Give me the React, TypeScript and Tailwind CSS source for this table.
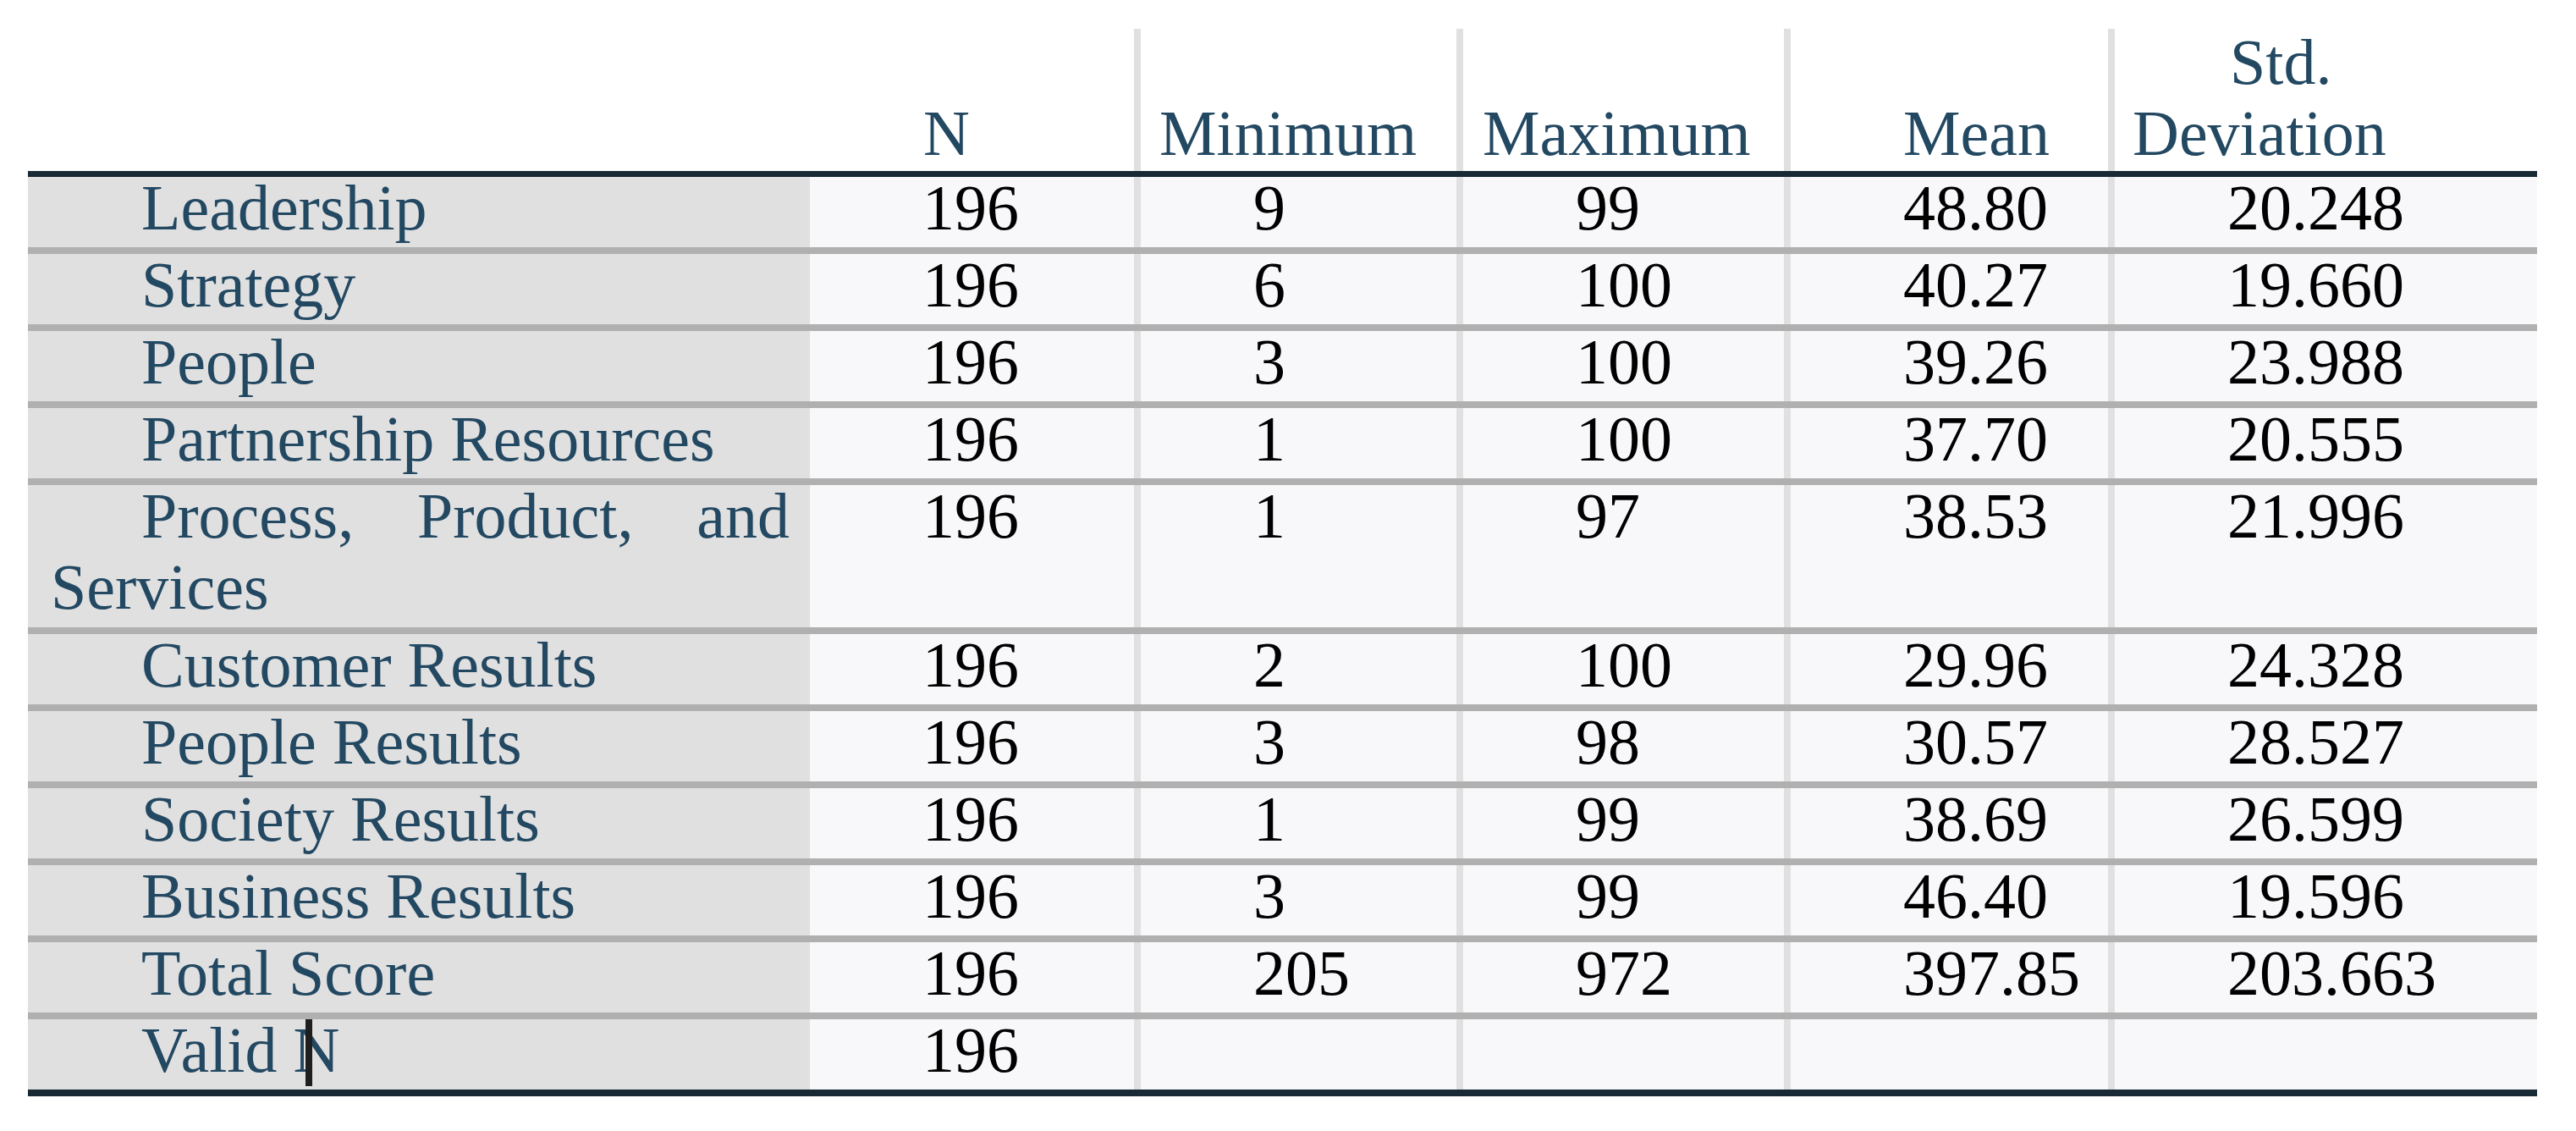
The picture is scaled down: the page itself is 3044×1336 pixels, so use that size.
import React from 'react';

type Row = {
  label: string;
  n: string;
  min: string;
  max: string;
  mean: string;
  sd: string;
  tall?: boolean;
  caret?: boolean;
};

const rows: Row[] = [
  { label: 'Leadership', n: '196', min: '9', max: '99', mean: '48.80', sd: '20.248' },
  { label: 'Strategy', n: '196', min: '6', max: '100', mean: '40.27', sd: '19.660' },
  { label: 'People', n: '196', min: '3', max: '100', mean: '39.26', sd: '23.988' },
  { label: 'Partnership Resources', n: '196', min: '1', max: '100', mean: '37.70', sd: '20.555' },
  { label: 'Process, Product, and Services', n: '196', min: '1', max: '97', mean: '38.53', sd: '21.996', tall: true },
  { label: 'Customer Results', n: '196', min: '2', max: '100', mean: '29.96', sd: '24.328' },
  { label: 'People Results', n: '196', min: '3', max: '98', mean: '30.57', sd: '28.527' },
  { label: 'Society Results', n: '196', min: '1', max: '99', mean: '38.69', sd: '26.599' },
  { label: 'Business Results', n: '196', min: '3', max: '99', mean: '46.40', sd: '19.596' },
  { label: 'Total Score', n: '196', min: '205', max: '972', mean: '397.85', sd: '203.663' },
  { label: 'Valid N', n: '196', min: '', max: '', mean: '', sd: '', caret: true },
];

function DataCell({ value, width, first }: { value: string; width: string; first?: boolean }) {
  return (
    <div className={`${width} ${first ? '' : 'border-l-[8px] border-[#e0e0e0]'} bg-[#f8f8fa] pl-[133px] text-black`}>
      <div className="-mt-[6px]">{value}</div>
    </div>
  );
}

export default function App() {
  return (
    <div className="w-[3044px] h-[1336px] bg-white font-['Liberation_Serif','Times_New_Roman',serif] text-[76px] leading-[84px]">
      <div className="ml-[33px] w-[2965px]">
        {/* header */}
        <div className="flex h-[202px] pt-[34px] text-[#234862]">
          <div className="w-[924px]" />
          <div className="w-[383px] flex items-end pl-[134px]">
            <div className="mb-[3px]">N</div>
          </div>
          <div className="w-[381px] flex items-end border-l-[8px] border-[#e0e0e0] pl-[22px]">
            <div className="mb-[3px]">Minimum</div>
          </div>
          <div className="w-[387px] flex items-end border-l-[8px] border-[#e0e0e0] pl-[23px]">
            <div className="mb-[3px]">Maximum</div>
          </div>
          <div className="w-[383px] flex items-end border-l-[8px] border-[#e0e0e0] pl-[133px]">
            <div className="mb-[3px]">Mean</div>
          </div>
          <div className="w-[507px] flex flex-col justify-end border-l-[8px] border-[#e0e0e0] pl-[21px]">
            <div className="pl-[115px]">Std.</div>
            <div className="mb-[3px]">Deviation</div>
          </div>
        </div>
        <div className="h-[7px] bg-[#182a36]" />

        {rows.map((r, i) => {
          const last = i === rows.length - 1;
          return (
            <div
              key={r.label}
              className={`flex ${r.tall ? 'h-[176px]' : last ? 'h-[83px]' : 'h-[91px]'} ${last ? '' : 'border-b-[8px] border-[#b0b0b0]'}`}
            >
              <div className="relative w-[924px] bg-[#e0e0e0] pl-[27px] pr-[24px] text-[#234862] text-justify indent-[107px]">
                <div className="-mt-[6px]">{r.label}</div>
                {r.caret && (
                  <span className="absolute left-[328px] top-0 bottom-[4px] w-[8px] bg-[#1e1e1e]" />
                )}
              </div>
              <DataCell value={r.n} width="w-[383px]" first />
              <DataCell value={r.min} width="w-[381px]" />
              <DataCell value={r.max} width="w-[387px]" />
              <DataCell value={r.mean} width="w-[383px]" />
              <DataCell value={r.sd} width="w-[507px]" />
            </div>
          );
        })}
        <div className="h-[8px] bg-[#182a36]" />
      </div>
    </div>
  );
}
